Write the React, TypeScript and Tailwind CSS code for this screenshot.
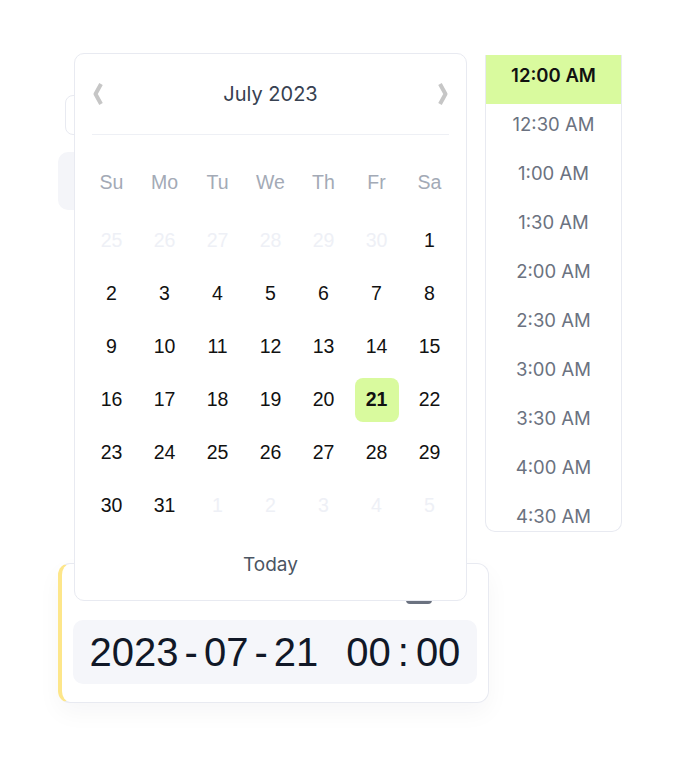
import React from 'react';

const WEEKDAYS = ['Su', 'Mo', 'Tu', 'We', 'Th', 'Fr', 'Sa'];

// 6 rows of the July 2023 grid; muted = outside the month
const DAYS: { n: number; muted?: boolean }[] = [
  ...[25, 26, 27, 28, 29, 30].map((n) => ({ n, muted: true })),
  ...Array.from({ length: 31 }, (_, i) => ({ n: i + 1 })),
  ...[1, 2, 3, 4, 5].map((n) => ({ n, muted: true })),
];

const TIMES = [
  '12:00 AM',
  '12:30 AM',
  '1:00 AM',
  '1:30 AM',
  '2:00 AM',
  '2:30 AM',
  '3:00 AM',
  '3:30 AM',
  '4:00 AM',
  '4:30 AM',
];

function Chevron({ dir }: { dir: 'left' | 'right' }) {
  return (
    <svg width="10" height="24" viewBox="0 0 10 24" fill="none">
      <polyline
        points={dir === 'left' ? '8,2 2.5,12 8,22' : '2,2 7.5,12 2,22'}
        stroke="#c6c6c6"
        strokeWidth="4"
        strokeLinejoin="round"
      />
    </svg>
  );
}

function Calendar() {
  return (
    <div className="absolute left-[74px] top-[53px] w-[393px] h-[548px] rounded-[10px] border border-[#e8eaf1] bg-white flex flex-col">
      {/* Header */}
      <div className="h-[80px] flex items-center justify-between px-[18px]">
        <Chevron dir="left" />
        <span className="font-['Inter',sans-serif] text-[20px] text-[#374151]">July 2023</span>
        <Chevron dir="right" />
      </div>
      <div className="mx-[17px] h-px bg-[#eef0f5]" />

      {/* Weekdays */}
      <div className="mt-[25px] px-[10px] grid grid-cols-7 h-[46px] items-center font-['Liberation_Sans',Arial,sans-serif] text-[19.5px] text-[#a3aab6]">
        {WEEKDAYS.map((d) => (
          <div key={d} className="text-center">
            {d}
          </div>
        ))}
      </div>

      {/* Days */}
      <div className="mt-[8px] px-[10px] grid grid-cols-7 font-['Liberation_Sans',Arial,sans-serif] text-[19.5px]">
        {DAYS.map((d, i) => {
          const selected = !d.muted && d.n === 21;
          return (
            <div key={i} className="h-[53px] flex items-center justify-center">
              {selected ? (
                <div className="w-[44px] h-[44px] rounded-[8px] bg-[#d9fa9e] flex items-center justify-center font-bold text-[#111111]">
                  {d.n}
                </div>
              ) : (
                <span className={d.muted ? 'text-[#eef0f6]' : 'text-[#111111]'}>{d.n}</span>
              )}
            </div>
          );
        })}
      </div>

      <div className="mt-[13px] h-[40px] flex items-center justify-center font-['Inter',sans-serif] text-[19px] text-[#4b5563]">
        Today
      </div>
    </div>
  );
}

function TimeList() {
  return (
    <div className="absolute left-[485px] top-[55px] w-[137px] h-[477px] rounded-b-[10px] border border-[#e8eaf1] border-t-0 bg-white overflow-hidden">
      {TIMES.map((t, i) => (
        <div
          key={t}
          className={`h-[49px] pb-[7px] flex items-center justify-center font-['Inter',sans-serif] text-[18.5px] ${
            i === 0 ? 'bg-[#d9fa9e] text-[#111111] font-semibold' : 'text-[#6b7280]'
          }`}
        >
          {t}
        </div>
      ))}
    </div>
  );
}

export default function App() {
  return (
    <div className="relative w-[676px] h-[768px] bg-white overflow-hidden">
      {/* Form underneath the popovers */}
      <div className="pt-[95px] pl-[58px]">
        <div className="ml-[7px] w-[300px] h-[40px] rounded-[8px] border border-[#e8eaf1]" />
        <div className="mt-[17px] w-[300px] h-[58px] rounded-[10px] bg-[#f4f5f9]" />

        <div className="mt-[353px] w-[431px] h-[140px] rounded-[12px] border border-[#e8eaf1] border-l-[4px] border-l-[#fde68a] bg-white shadow-[0_10px_24px_rgba(15,23,42,0.04)] px-[11px] pt-[19px]">
          <div className="h-[18px] flex items-end justify-between pl-[8px] pr-[45px]">
            <span className="font-['Inter',sans-serif] text-[14px] leading-none text-[#6b7280]">Start date</span>
            <div className="w-[26px] h-[18px] -mb-[3px] rounded-[4px] bg-[#6b7280]" />
          </div>
          <div className="mt-[19px] h-[64px] rounded-[10px] bg-[#f5f6fa] flex items-center justify-center font-['Liberation_Sans',Arial,sans-serif] text-[40px] text-[#111827]">
            <span>2023</span>
            <span className="mx-[6px]">-</span>
            <span>07</span>
            <span className="mx-[6px]">-</span>
            <span>21</span>
            <span className="ml-[28px]">00</span>
            <span className="mx-[7px]">:</span>
            <span>00</span>
          </div>
        </div>
      </div>

      <Calendar />
      <TimeList />
    </div>
  );
}
